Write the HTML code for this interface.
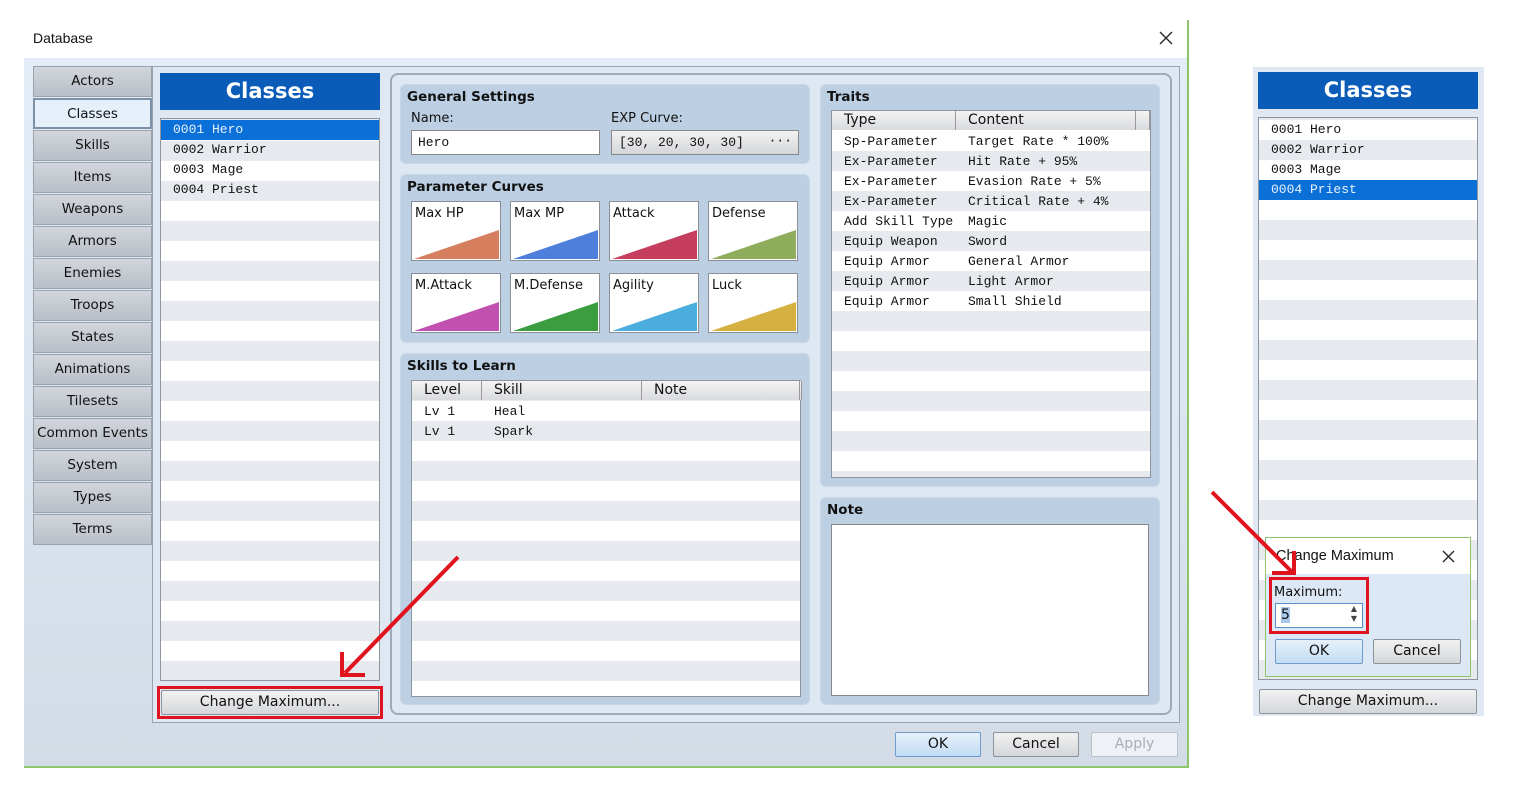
<!DOCTYPE html>
<html><head><meta charset="utf-8"><style>
*{box-sizing:border-box;margin:0;padding:0}
body{width:1520px;height:789px;background:#fff;position:relative;overflow:hidden;font-family:"DejaVu Sans","Liberation Sans",sans-serif;font-size:13px;color:#111}
.a{position:absolute}
.mono{font-family:"Liberation Mono","DejaVu Sans Mono",monospace;font-size:13px}
.tab{position:absolute;left:33px;width:119px;height:31px;background:linear-gradient(#d2d6dc,#b9bfc7);border:1px solid #9aa2ac;text-align:center;line-height:29px;font-size:13.5px}
.hdr{position:absolute;background:#0a5cb8;color:#fff;font-weight:bold;font-size:21px;text-align:center}
.list{position:absolute;border:1px solid #8e959e;background:repeating-linear-gradient(#fff 0 20px,#e6eaef 20px 40px)}
.row{position:absolute;left:0;right:0;height:20px;line-height:20px;padding-left:12px}
.sel{background:#0a6fd6;color:#e8f2ff}
.btn{position:absolute;border:1px solid #8d939a;background:linear-gradient(#f2f2f2,#d4d6d9);text-align:center;font-size:14px;border-radius:2px}
.grp{position:absolute;background:#bccfe3;border-radius:6px;border:1px solid #c9d6e4}
.gt{position:absolute;left:6px;top:4px;font-weight:bold;font-size:13.5px}
.cv{position:absolute;width:90px;height:60px;background:#fff;border:1px solid #8a8f96}
.cv span{position:absolute;left:3px;top:4px;font-size:13px}
.cv svg{position:absolute;left:2px;top:26px}
.th{position:absolute;top:0;height:19px;line-height:19px;background:linear-gradient(#f4f4f4,#d8dadd);border-right:1px solid #999;padding-left:12px;font-size:14px;font-family:"DejaVu Sans",sans-serif}
</style></head><body>
<div class="a" style="left:33px;top:30px;font-size:14px;font-family:'Liberation Sans',sans-serif">Database</div>
<svg class="a" style="left:1159px;top:31px" width="14" height="14"><path d="M1 1L13 13M13 1L1 13" stroke="#222" stroke-width="1.3"/></svg>
<div class="a" style="left:24px;top:58px;width:1164px;height:709px;background:linear-gradient(#e4edf7,#d3dce6)"></div>
<div class="a" style="left:1187px;top:20px;width:2px;height:748px;background:#8cc56a"></div>
<div class="a" style="left:24px;top:766px;width:1165px;height:2px;background:#8cc56a"></div>
<div class="a" style="left:152px;top:66px;width:1028px;height:657px;border:1px solid #9aa3ad;background:#dfe8f2"></div>

<div class="tab" style="top:66px">Actors</div>
<div class="tab" style="top:98px;background:#e6f0fb;border:2px solid #7c90a8">Classes</div>
<div class="tab" style="top:130px">Skills</div>
<div class="tab" style="top:162px">Items</div>
<div class="tab" style="top:194px">Weapons</div>
<div class="tab" style="top:226px">Armors</div>
<div class="tab" style="top:258px">Enemies</div>
<div class="tab" style="top:290px">Troops</div>
<div class="tab" style="top:322px">States</div>
<div class="tab" style="top:354px">Animations</div>
<div class="tab" style="top:386px">Tilesets</div>
<div class="tab" style="top:418px">Common Events</div>
<div class="tab" style="top:450px">System</div>
<div class="tab" style="top:482px">Types</div>
<div class="tab" style="top:514px">Terms</div>

<div class="hdr" style="left:160px;top:73px;width:220px;height:37px;line-height:37px">Classes</div>
<div class="list mono" style="left:160px;top:118px;width:220px;height:563px;background:repeating-linear-gradient(#e6eaef 0 20px,#fff 20px 40px);background-position:0 -18px">
<div class="row sel" style="top:1px">0001 Hero</div>
<div class="row" style="top:21px">0002 Warrior</div>
<div class="row" style="top:41px">0003 Mage</div>
<div class="row" style="top:61px">0004 Priest</div>
</div>
<div class="btn" style="left:161px;top:690px;width:218px;height:25px;line-height:23px">Change Maximum...</div>
<div class="a" style="left:157px;top:686px;width:226px;height:33px;border:3px solid #e0141e"></div>

<div class="a" style="left:390px;top:73px;width:782px;height:642px;border:2px solid #9eaab8;border-radius:8px;background:#dde8f3"></div>

<div class="grp" style="left:400px;top:84px;width:410px;height:80px">
<div class="gt">General Settings</div>
<div class="a" style="left:10px;top:26px">Name:</div>
<div class="a" style="left:210px;top:26px">EXP Curve:</div>
<div class="a mono" style="left:10px;top:45px;width:189px;height:25px;background:#fff;border:1px solid #888;padding:4px 0 0 6px">Hero</div>
<div class="a mono" style="left:210px;top:45px;width:188px;height:25px;background:linear-gradient(#f2f2f2,#d4d6d9);border:1px solid #888;padding:4px 0 0 7px">[30, 20, 30, 30]<span style="position:absolute;right:6px;top:2px">···</span></div>
</div>

<div class="grp" style="left:400px;top:174px;width:410px;height:169px">
<div class="gt">Parameter Curves</div>
<div class="cv" style="left:10px;top:26px"><span>Max HP</span><svg width="86" height="32"><polygon points="0,31 85,2 85,31" fill="#d67f5f"/></svg></div>
<div class="cv" style="left:109px;top:26px"><span>Max MP</span><svg width="86" height="32"><polygon points="0,31 85,2 85,31" fill="#4f7fdd"/></svg></div>
<div class="cv" style="left:208px;top:26px"><span>Attack</span><svg width="86" height="32"><polygon points="0,31 85,2 85,31" fill="#c53e5d"/></svg></div>
<div class="cv" style="left:307px;top:26px"><span>Defense</span><svg width="86" height="32"><polygon points="0,31 85,2 85,31" fill="#8fae5d"/></svg></div>
<div class="cv" style="left:10px;top:98px"><span>M.Attack</span><svg width="86" height="32"><polygon points="0,31 85,2 85,31" fill="#c250b0"/></svg></div>
<div class="cv" style="left:109px;top:98px"><span>M.Defense</span><svg width="86" height="32"><polygon points="0,31 85,2 85,31" fill="#3b9c40"/></svg></div>
<div class="cv" style="left:208px;top:98px"><span>Agility</span><svg width="86" height="32"><polygon points="0,31 85,2 85,31" fill="#4badde"/></svg></div>
<div class="cv" style="left:307px;top:98px"><span>Luck</span><svg width="86" height="32"><polygon points="0,31 85,2 85,31" fill="#d6b040"/></svg></div>
</div>

<div class="grp" style="left:400px;top:353px;width:410px;height:352px">
<div class="gt">Skills to Learn</div>
<div class="list mono" style="left:10px;top:26px;width:390px;height:317px;background:repeating-linear-gradient(#fff 0 20px,#e6eaef 20px 40px);background-position:0 20px">
<div class="th" style="left:0;width:70px">Level</div>
<div class="th" style="left:70px;width:160px">Skill</div>
<div class="th" style="left:230px;width:158px">Note</div>
<div class="th" style="left:388px;width:2px;padding:0"></div>
<div class="row" style="top:21px">Lv  1<span class="a" style="left:82px">Heal</span></div>
<div class="row" style="top:41px">Lv  1<span class="a" style="left:82px">Spark</span></div>
</div>
</div>

<div class="grp" style="left:820px;top:84px;width:340px;height:403px">
<div class="gt">Traits</div>
<div class="list mono" style="left:10px;top:25px;width:320px;height:368px;background:repeating-linear-gradient(#fff 0 20px,#e6eaef 20px 40px);background-position:0 20px">
<div class="th" style="left:0;width:124px">Type</div>
<div class="th" style="left:124px;width:180px">Content</div>
<div class="th" style="left:304px;width:14px;padding:0"></div>
<div class="row" style="top:21px">Sp-Parameter<span class="a" style="left:136px">Target Rate * 100%</span></div>
<div class="row" style="top:41px">Ex-Parameter<span class="a" style="left:136px">Hit Rate + 95%</span></div>
<div class="row" style="top:61px">Ex-Parameter<span class="a" style="left:136px">Evasion Rate + 5%</span></div>
<div class="row" style="top:81px">Ex-Parameter<span class="a" style="left:136px">Critical Rate + 4%</span></div>
<div class="row" style="top:101px">Add Skill Type<span class="a" style="left:136px">Magic</span></div>
<div class="row" style="top:121px">Equip Weapon<span class="a" style="left:136px">Sword</span></div>
<div class="row" style="top:141px">Equip Armor<span class="a" style="left:136px">General Armor</span></div>
<div class="row" style="top:161px">Equip Armor<span class="a" style="left:136px">Light Armor</span></div>
<div class="row" style="top:181px">Equip Armor<span class="a" style="left:136px">Small Shield</span></div>
</div>
</div>

<div class="grp" style="left:820px;top:497px;width:340px;height:208px">
<div class="gt">Note</div>
<div class="a" style="left:10px;top:26px;width:318px;height:172px;background:#fff;border:1px solid #888"></div>
</div>

<div class="btn" style="left:895px;top:732px;width:86px;height:25px;line-height:23px;background:linear-gradient(#e6f1fb,#c2dcf3);border-color:#6e9ccc">OK</div>
<div class="btn" style="left:993px;top:732px;width:86px;height:25px;line-height:23px">Cancel</div>
<div class="btn" style="left:1091px;top:732px;width:87px;height:25px;line-height:23px;color:#aab;background:#eef2f6;border-color:#b8c0c8">Apply</div>

<div class="a" style="left:1253px;top:67px;width:231px;height:649px;background:#dfe8f3"></div>
<div class="hdr" style="left:1258px;top:72px;width:220px;height:37px;line-height:37px">Classes</div>
<div class="list mono" style="left:1258px;top:117px;width:220px;height:563px;background:repeating-linear-gradient(#e6eaef 0 20px,#fff 20px 40px);background-position:0 -18px">
<div class="row" style="top:2px">0001 Hero</div>
<div class="row" style="top:22px">0002 Warrior</div>
<div class="row" style="top:42px">0003 Mage</div>
<div class="row sel" style="top:62px">0004 Priest</div>
</div>
<div class="btn" style="left:1259px;top:689px;width:218px;height:25px;line-height:23px">Change Maximum...</div>

<div class="a" style="left:1265px;top:537px;width:206px;height:140px;background:linear-gradient(#fff 0 36px,#dce8f5 36px);border:1px solid #8cc56a"></div>
<div class="a" style="left:1276px;top:548px;font-size:14.5px;font-family:'Liberation Sans',sans-serif">Change Maximum</div>
<svg class="a" style="left:1442px;top:550px" width="13" height="13"><path d="M1 1L12 12M12 1L1 12" stroke="#222" stroke-width="1.3"/></svg>
<div class="a" style="left:1274px;top:585px;font-size:13px">Maximum:</div>
<div class="a" style="left:1275px;top:603px;width:88px;height:25px;background:#fff;border:1px solid #5a8ec8;padding:3px 0 0 5px;font-size:14px"><span style="background:#a8c8ec">5</span><span class="a" style="right:5px;top:0;font-size:8px;line-height:10px;color:#444">▲<br>▼</span></div>
<div class="a" style="left:1269px;top:577px;width:100px;height:57px;border:3px solid #e0141e"></div>
<div class="btn" style="left:1275px;top:639px;width:88px;height:25px;line-height:23px;background:linear-gradient(#e6f1fb,#c2dcf3);border-color:#6e9ccc">OK</div>
<div class="btn" style="left:1373px;top:639px;width:88px;height:25px;line-height:23px">Cancel</div>

<svg class="a" style="left:0;top:0" width="1520" height="789">
<g stroke="#e0141e" stroke-width="4" fill="none">
<path d="M458 557L345 673"/><path d="M342 652L342 675L365 675"/>
<path d="M1212 492L1292 572"/><path d="M1272 573L1294 573L1294 551"/>
</g></svg>
</body></html>
